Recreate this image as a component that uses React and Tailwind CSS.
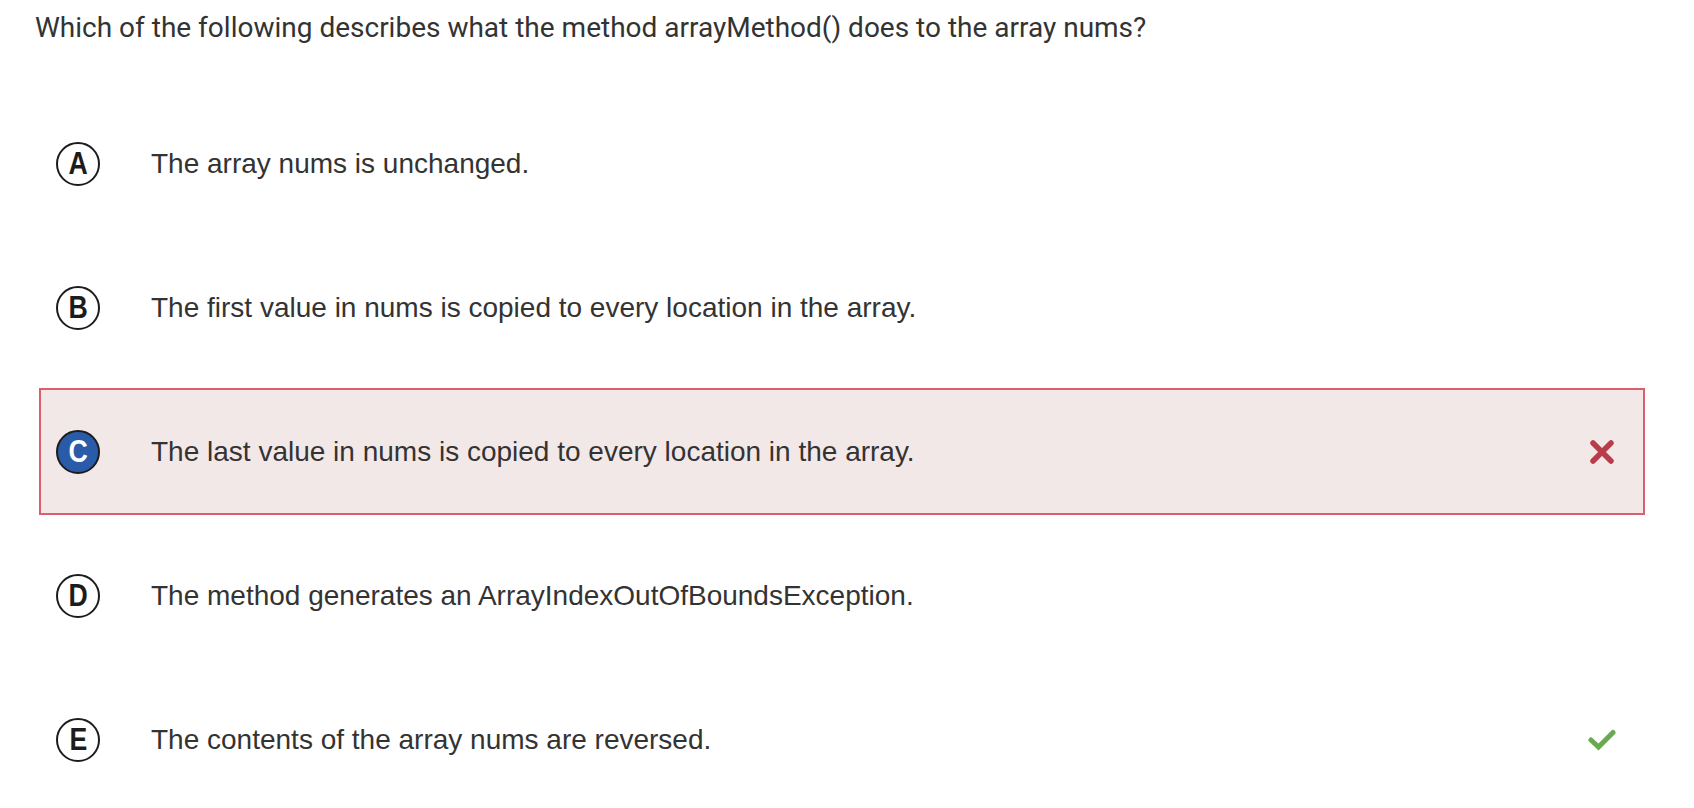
import React from 'react';

const options = [
  { letter: 'A', text: 'The array nums is unchanged.' },
  { letter: 'B', text: 'The first value in nums is copied to every location in the array.' },
  { letter: 'C', text: 'The last value in nums is copied to every location in the array.', selected: true, wrong: true },
  { letter: 'D', text: 'The method generates an ArrayIndexOutOfBoundsException.' },
  { letter: 'E', text: 'The contents of the array nums are reversed.', correct: true },
];

const CrossIcon = () => (
  <svg width="26" height="26" viewBox="0 0 26 26">
    <path d="M4 4 L22 22 M22 4 L4 22" stroke="#b93c4b" strokeWidth="5.5" strokeLinecap="round" />
  </svg>
);

const CheckIcon = () => (
  <svg width="28" height="22" viewBox="0 0 28 22">
    <path d="M3 11 L10.5 18 L25 3.5" stroke="#69a94f" strokeWidth="5" fill="none" strokeLinecap="round" strokeLinejoin="miter" />
  </svg>
);

const App = () => {
  return (
    <div className="min-h-[808px] bg-white">
      <div className="px-[35px] pt-[10px] text-[28px] leading-[36px] text-[#333333] font-['Roboto',sans-serif]">
        Which of the following describes what the method arrayMethod() does to the array nums?
      </div>

      <div className="mt-[54px] flex flex-col gap-[17px] pl-[39px] pr-[49px] font-['Liberation_Sans',Arial,sans-serif]">
        {options.map((opt) => (
          <div
            key={opt.letter}
            className={
              opt.selected
                ? 'flex h-[127px] items-center border-2 border-[#d85f6b] bg-[#f3e8e8]'
                : 'flex h-[127px] items-center border-2 border-transparent'
            }
          >
            <div
              className={
                opt.selected
                  ? 'ml-[15px] flex h-[44px] w-[44px] items-center justify-center rounded-full border-2 border-[#1c1c1c] bg-[#2a5ba8] text-[31px] font-bold text-white'
                  : 'ml-[15px] flex h-[44px] w-[44px] items-center justify-center rounded-full border-2 border-[#1c1c1c] bg-white text-[31px] font-bold text-[#1c1c1c]'
              }
            >
              <span className="inline-block scale-x-[0.86] leading-none">{opt.letter}</span>
            </div>
            <div className="ml-[51px] flex-1 text-[28px] text-[#333333]">{opt.text}</div>
            <div className="mr-[26px] flex w-[30px] items-center justify-center">
              {opt.wrong && <CrossIcon />}
              {opt.correct && <CheckIcon />}
            </div>
          </div>
        ))}
      </div>
    </div>
  );
};

export default App;
